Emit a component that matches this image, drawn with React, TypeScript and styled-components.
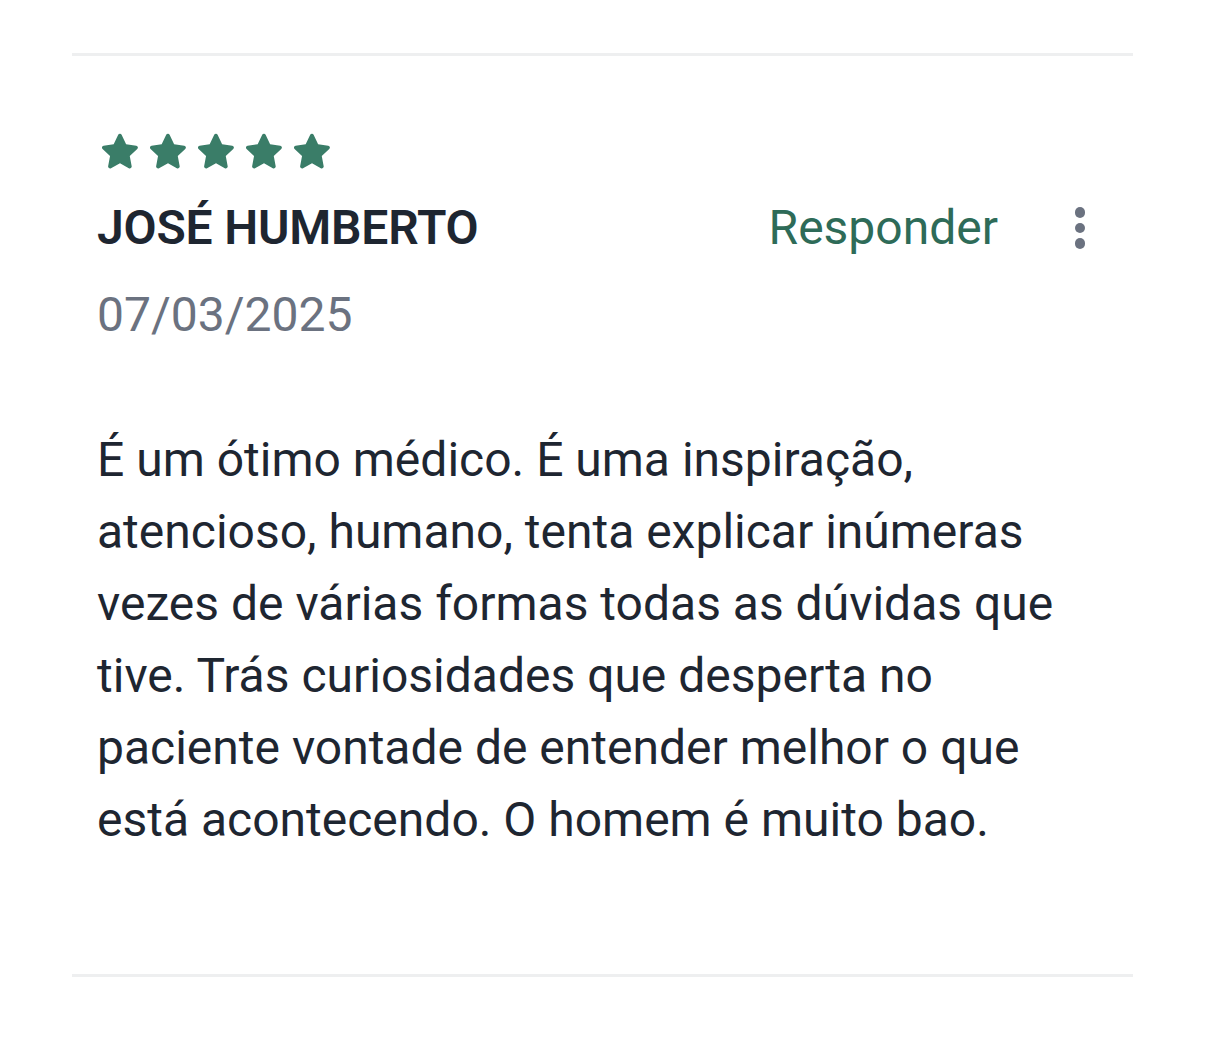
import styled, { createGlobalStyle } from "styled-components";

const GlobalStyle = createGlobalStyle`
  html, body {
    margin: 0;
    padding: 0;
    background: #ffffff;
  }
  body {
    font-family: Roboto, "Liberation Sans", Arial, sans-serif;
    -webkit-font-smoothing: antialiased;
  }
`;

const Page = styled.div`
  padding: 53px 73px 0 72px;
`;

const ReviewCard = styled.article`
  border-top: 3px solid #eeeff0;
  border-bottom: 3px solid #eeeff0;
  padding: 78px 45px 118px 25px;
`;

const Stars = styled.div`
  display: flex;
  gap: 12px;
  height: 34px;
  align-items: center;
  padding-left: 5px;
`;

const Star = styled.svg`
  width: 36px;
  height: 36px;
  fill: #3a7d68;
`;

const HeaderRow = styled.div`
  display: flex;
  align-items: baseline;
  margin-top: 32px;
`;

const Name = styled.h3`
  flex: 1;
  margin: 0;
  font-size: 48px;
  line-height: 56px;
  font-weight: 600;
  color: #1e2631;
  letter-spacing: -0.2px;
`;

const ReplyButton = styled.button`
  background: none;
  border: 0;
  padding: 0;
  margin-right: 76px;
  font-family: inherit;
  font-size: 48px;
  line-height: 56px;
  color: #2e6b58;
  cursor: pointer;
`;

const MoreButton = styled.button`
  align-self: center;
  background: none;
  border: 0;
  padding: 0;
  width: 12px;
  margin-right: 2px;
  display: flex;
  flex-direction: column;
  align-items: center;
  gap: 5px;
  cursor: pointer;
`;

const Dot = styled.span`
  width: 10.5px;
  height: 10.5px;
  border-radius: 50%;
  background: #6b7280;
`;

const DateText = styled.div`
  margin-top: 31px;
  font-size: 48px;
  line-height: 56px;
  color: #6b7280;
`;

const Body = styled.p`
  margin: 81px 0 0;
  font-size: 48px;
  line-height: 72px;
  color: #1e2631;
`;

function StarIcon() {
  return (
    <Star viewBox="2.6 2 18.8 18.8">
      <path d="M12 2.4c.4 0 .7.2.9.6l2.3 4.9 5.3.7c.4.1.7.3.8.7.1.4 0 .8-.3 1l-3.9 3.7 1 5.3c.1.4-.1.8-.4 1-.3.2-.7.3-1.1.1L12 17.8l-4.7 2.6c-.4.2-.8.1-1.1-.1-.3-.2-.5-.6-.4-1l1-5.3-3.9-3.7c-.3-.3-.4-.7-.3-1 .1-.4.4-.6.8-.7l5.3-.7 2.3-4.9c.2-.4.5-.6 1-.6z" />
    </Star>
  );
}

export default function App() {
  return (
    <>
      <GlobalStyle />
      <Page>
        <ReviewCard>
          <Stars>
            {[0, 1, 2, 3, 4].map((i) => (
              <StarIcon key={i} />
            ))}
          </Stars>
          <HeaderRow>
            <Name>JOSÉ HUMBERTO</Name>
            <ReplyButton>Responder</ReplyButton>
            <MoreButton aria-label="Mais opções">
              <Dot />
              <Dot />
              <Dot />
            </MoreButton>
          </HeaderRow>
          <DateText>07/03/2025</DateText>
          <Body>
            É um ótimo médico. É uma inspiração, atencioso, humano, tenta explicar
            inúmeras vezes de várias formas todas as dúvidas que tive. Trás
            curiosidades que desperta no paciente vontade de entender melhor o que
            está acontecendo. O homem é muito bao.
          </Body>
        </ReviewCard>
      </Page>
    </>
  );
}
